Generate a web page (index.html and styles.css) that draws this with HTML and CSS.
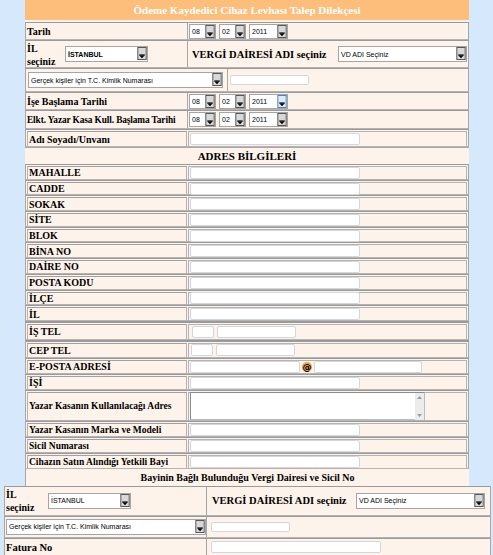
FILE: index.html
```html
<!DOCTYPE html>
<html lang="tr">
<head>
<meta charset="utf-8">
<title>Ödeme Kaydedici Cihaz Levhası Talep Dilekçesi</title>
<link rel="stylesheet" href="styles.css">
</head>
<body>
<div class="page">
  <div class="title">Ödeme Kaydedici Cihaz Levhası Talep Dilekçesi</div>

  <div class="row h-tarih">
    <div class="lab">Tarih</div>
    <div class="val dates">
      <span class="sel s-dd"><span class="st">08</span><span class="btn"><svg width="10" height="14" viewBox="0 0 10 14"><rect x="0.5" y="0.5" width="9" height="13" fill="#d8d8d8" stroke="#4d4d4d"/><rect x="2" y="8" width="6" height="1" fill="#000"/><polygon points="2,9 8,9 5,12" fill="#000"/></svg></span></span>
      <span class="sel s-dd"><span class="st">02</span><span class="btn"><svg width="10" height="14" viewBox="0 0 10 14"><rect x="0.5" y="0.5" width="9" height="13" fill="#d8d8d8" stroke="#4d4d4d"/><rect x="2" y="8" width="6" height="1" fill="#000"/><polygon points="2,9 8,9 5,12" fill="#000"/></svg></span></span>
      <span class="sel s-yy"><span class="st">2011</span><span class="btn"><svg width="10" height="14" viewBox="0 0 10 14"><rect x="0.5" y="0.5" width="9" height="13" fill="#d8d8d8" stroke="#4d4d4d"/><rect x="2" y="8" width="6" height="1" fill="#000"/><polygon points="2,9 8,9 5,12" fill="#000"/></svg></span></span>
    </div>
  </div>

  <div class="row h-il">
    <div class="lab il-lab">
      <div class="il-text"><div>İL</div><div>seçiniz</div></div>
      <span class="sel s-il"><span class="st">İSTANBUL</span><span class="btn"><svg width="10" height="14" viewBox="0 0 10 14"><rect x="0.5" y="0.5" width="9" height="13" fill="#d8d8d8" stroke="#4d4d4d"/><rect x="2" y="8" width="6" height="1" fill="#000"/><polygon points="2,9 8,9 5,12" fill="#000"/></svg></span></span>
    </div>
    <div class="val vd">
      <span class="vd-text">VERGİ DAİRESİ ADI seçiniz</span>
      <span class="sel s-vd"><span class="st">VD ADI Seçiniz</span><span class="btn"><svg width="10" height="14" viewBox="0 0 10 14"><rect x="0.5" y="0.5" width="9" height="13" fill="#d8d8d8" stroke="#4d4d4d"/><rect x="2" y="8" width="6" height="1" fill="#000"/><polygon points="2,9 8,9 5,12" fill="#000"/></svg></span></span>
    </div>
  </div>

  <div class="row h-tc">
    <div class="tc-cell">
      <span class="sel s-tc"><span class="st">Gerçek kişiler için T.C. Kimlik Numarası</span><span class="btn"><svg width="10" height="14" viewBox="0 0 10 14"><rect x="0.5" y="0.5" width="9" height="13" fill="#d8d8d8" stroke="#4d4d4d"/><rect x="2" y="8" width="6" height="1" fill="#000"/><polygon points="2,9 8,9 5,12" fill="#000"/></svg></span></span>
    </div>
    <div class="val tc-val"><span class="inp i-tc"></span></div>
  </div>

  <div class="row h-ise">
    <div class="lab">İşe Başlama Tarihi</div>
    <div class="val dates">
      <span class="sel s-dd"><span class="st">08</span><span class="btn"><svg width="10" height="14" viewBox="0 0 10 14"><rect x="0.5" y="0.5" width="9" height="13" fill="#d8d8d8" stroke="#4d4d4d"/><rect x="2" y="8" width="6" height="1" fill="#000"/><polygon points="2,9 8,9 5,12" fill="#000"/></svg></span></span>
      <span class="sel s-dd"><span class="st">02</span><span class="btn"><svg width="10" height="14" viewBox="0 0 10 14"><rect x="0.5" y="0.5" width="9" height="13" fill="#d8d8d8" stroke="#4d4d4d"/><rect x="2" y="8" width="6" height="1" fill="#000"/><polygon points="2,9 8,9 5,12" fill="#000"/></svg></span></span>
      <span class="sel s-yy focus"><span class="st">2011</span><span class="btn"><svg width="10" height="14" viewBox="0 0 10 14"><rect x="0.5" y="0.5" width="9" height="13" fill="#dbe9f8" stroke="#3c7fc4"/><rect x="2" y="8" width="6" height="1" fill="#000"/><polygon points="2,9 8,9 5,12" fill="#000"/></svg></span></span>
    </div>
  </div>

  <div class="row h-elkt">
    <div class="lab narrow">Elkt. Yazar Kasa Kull. Başlama Tarihi</div>
    <div class="val dates">
      <span class="sel s-dd"><span class="st">08</span><span class="btn"><svg width="10" height="14" viewBox="0 0 10 14"><rect x="0.5" y="0.5" width="9" height="13" fill="#d8d8d8" stroke="#4d4d4d"/><rect x="2" y="8" width="6" height="1" fill="#000"/><polygon points="2,9 8,9 5,12" fill="#000"/></svg></span></span>
      <span class="sel s-dd"><span class="st">02</span><span class="btn"><svg width="10" height="14" viewBox="0 0 10 14"><rect x="0.5" y="0.5" width="9" height="13" fill="#d8d8d8" stroke="#4d4d4d"/><rect x="2" y="8" width="6" height="1" fill="#000"/><polygon points="2,9 8,9 5,12" fill="#000"/></svg></span></span>
      <span class="sel s-yy"><span class="st">2011</span><span class="btn"><svg width="10" height="14" viewBox="0 0 10 14"><rect x="0.5" y="0.5" width="9" height="13" fill="#d8d8d8" stroke="#4d4d4d"/><rect x="2" y="8" width="6" height="1" fill="#000"/><polygon points="2,9 8,9 5,12" fill="#000"/></svg></span></span>
    </div>
  </div>

  <div class="row h-adi boxed">
    <div class="lab">Adı Soyadı/Unvanı</div>
    <div class="val"><span class="inp i-long"></span></div>
  </div>

  <div class="section">ADRES BİLGİLERİ</div>

  <div class="addr">
    <div class="row h-a boxed"><div class="lab">MAHALLE</div><div class="val"><span class="inp i-long"></span></div></div>
    <div class="row h-a boxed"><div class="lab">CADDE</div><div class="val"><span class="inp i-long"></span></div></div>
    <div class="row h-a boxed"><div class="lab">SOKAK</div><div class="val"><span class="inp i-long"></span></div></div>
    <div class="row h-a boxed"><div class="lab">SİTE</div><div class="val"><span class="inp i-long"></span></div></div>
    <div class="row h-a boxed"><div class="lab">BLOK</div><div class="val"><span class="inp i-long"></span></div></div>
    <div class="row h-a boxed"><div class="lab">BİNA NO</div><div class="val"><span class="inp i-long"></span></div></div>
    <div class="row h-a boxed"><div class="lab">DAİRE NO</div><div class="val"><span class="inp i-long"></span></div></div>
    <div class="row h-a boxed"><div class="lab">POSTA KODU</div><div class="val"><span class="inp i-long"></span></div></div>
    <div class="row h-a boxed"><div class="lab">İLÇE</div><div class="val"><span class="inp i-long"></span></div></div>
    <div class="row h-a boxed"><div class="lab">İL</div><div class="val"><span class="inp i-long"></span></div></div>
  </div>

  <div class="row h-tel boxed">
    <div class="lab">İŞ TEL</div>
    <div class="val tel"><span class="inp i-code"></span><span class="inp i-num"></span></div>
  </div>
  <div class="row h-tel2 boxed">
    <div class="lab">CEP TEL</div>
    <div class="val tel"><span class="inp i-code"></span><span class="inp i-num"></span></div>
  </div>

  <div class="row h-b boxed">
    <div class="lab">E-POSTA ADRESİ</div>
    <div class="val mail"><span class="inp i-mail1"></span><span class="at">@</span><span class="inp i-mail2"></span></div>
  </div>
  <div class="row h-b boxed">
    <div class="lab">İŞİ</div>
    <div class="val"><span class="inp i-long"></span></div>
  </div>
  <div class="row h-ta boxed">
    <div class="lab small">Yazar Kasanın Kullanılacağı Adres</div>
    <div class="val">
      <span class="textarea"><span class="sb"><svg width="9" height="27" viewBox="0 0 9 27"><rect width="9" height="27" fill="#ececec"/><polygon points="2,6 7,6 4.5,3" fill="#9a9a9a"/><polygon points="2,21 7,21 4.5,24" fill="#9a9a9a"/></svg></span></span>
    </div>
  </div>
  <div class="row h-b boxed">
    <div class="lab small">Yazar Kasanın Marka ve Modeli</div>
    <div class="val"><span class="inp i-long"></span></div>
  </div>
  <div class="row h-b boxed">
    <div class="lab small">Sicil Numarası</div>
    <div class="val"><span class="inp i-long"></span></div>
  </div>
  <div class="row h-b boxed">
    <div class="lab small">Cihazın Satın Alındığı Yetkili Bayi</div>
    <div class="val"><span class="inp i-long"></span></div>
  </div>

  <div class="section bayi">Bayinin Bağlı Bulunduğu Vergi Dairesi ve Sicil No</div>
</div>

<div class="wide">
  <div class="row w-il">
    <div class="wlab il-lab">
      <div class="il-text"><div>İL</div><div>seçiniz</div></div>
      <span class="sel s-il"><span class="st">İSTANBUL</span><span class="btn"><svg width="10" height="14" viewBox="0 0 10 14"><rect x="0.5" y="0.5" width="9" height="13" fill="#d8d8d8" stroke="#4d4d4d"/><rect x="2" y="8" width="6" height="1" fill="#000"/><polygon points="2,9 8,9 5,12" fill="#000"/></svg></span></span>
    </div>
    <div class="val vd wvd">
      <span class="vd-text">VERGİ DAİRESİ ADI seçiniz</span>
      <span class="sel s-vd"><span class="st">VD ADI Seçiniz</span><span class="btn"><svg width="10" height="14" viewBox="0 0 10 14"><rect x="0.5" y="0.5" width="9" height="13" fill="#d8d8d8" stroke="#4d4d4d"/><rect x="2" y="8" width="6" height="1" fill="#000"/><polygon points="2,9 8,9 5,12" fill="#000"/></svg></span></span>
    </div>
  </div>
  <div class="row w-tc">
    <div class="wlab wtc">
      <span class="sel s-tc"><span class="st">Gerçek kişiler için T.C. Kimlik Numarası</span><span class="btn"><svg width="10" height="14" viewBox="0 0 10 14"><rect x="0.5" y="0.5" width="9" height="13" fill="#d8d8d8" stroke="#4d4d4d"/><rect x="2" y="8" width="6" height="1" fill="#000"/><polygon points="2,9 8,9 5,12" fill="#000"/></svg></span></span>
    </div>
    <div class="val wval"><span class="inp i-tc"></span></div>
  </div>
  <div class="row w-fat">
    <div class="wlab fat">Fatura No</div>
    <div class="val wval"><span class="inp i-long"></span></div>
  </div>
</div>
</body>
</html>
```

FILE: styles.css
```css
* { box-sizing: border-box; }
body {
  margin: 0;
  background: #d6e8fb;
  font-family: "Liberation Serif", "Times New Roman", serif;
  color: #000;
  overflow: hidden;
}
.page {
  width: 444px;
  margin-left: 25px;
  background: #fdf3ea;
}
.title {
  height: 20px;
  background: #fdbe7c;
  color: #fff;
  font-weight: bold;
  font-size: 11px;
  line-height: 20px;
  text-align: center;
  margin-bottom: 2px;
}
.row {
  display: flex;
  border: 1px solid #a7a7a7;
  border-top-color: #9a9a9a;
  border-bottom-color: #b4b4b4;
}
.lab {
  width: 162px;
  flex: none;
  border-right: 1px solid #a7a7a7;
  font-weight: bold;
  font-size: 10px;
  display: flex;
  align-items: center;
  padding-left: 1px;
  white-space: nowrap;
  overflow: hidden;
}
.lab.small { font-size: 9.5px; }
.lab.narrow { font-size: 9.3px; letter-spacing: -0.1px; }
.val {
  flex: 1;
  display: flex;
  align-items: center;
  padding-left: 1px;
}
.h-tarih { height: 18px; }
.h-il { height: 28px; }
.h-tc { height: 24px; }
.h-ise { height: 18px; }
.h-elkt { height: 19px; }
.h-adi { height: 18px; }
.h-a { height: 15.7px; }
.h-tel { height: 19px; border-top-width: 2px; }
.h-tel2 { height: 18px; border-top-width: 2px; }
.h-b { height: 16px; }
.h-ta { height: 31px; }

.dates { gap: 3px; }

/* boxed rows: cells spaced with their own borders */
.boxed { padding: 1px 1px 0 1px; gap: 1px; }
.boxed .lab {
  width: 160px;
  border: 1px solid #b3b3b3;
  border-top-color: #a0a0a0;
  border-bottom: none;
  padding-left: 1px;
}
.boxed .val {
  border: 1px solid #b3b3b3;
  border-bottom: none;
  padding-left: 1px;
}

.section {
  height: 17px;
  border-top: 1px solid #a7a7a7;
  font-weight: bold;
  font-size: 11px;
  text-align: center;
  line-height: 16px;
}
.section.bayi {
  font-size: 10px;
  border-top: none;
  border-left: 1px solid #a7a7a7;
  height: 17px;
  line-height: 17px;
}

/* select widget */
.sel {
  display: inline-flex;
  align-items: stretch;
  height: 15px;
  background: #fff;
  border: 1px solid #a5a5a5;
  font-family: "Liberation Sans", Arial, sans-serif;
  font-size: 7px;
  color: #000;
}
.sel .st {
  flex: 1;
  display: flex;
  align-items: center;
  padding-left: 2px;
  white-space: nowrap;
  overflow: hidden;
}
.sel .btn { display: flex; align-items: stretch; }
.sel .btn svg { display: block; height: 13px; }
.s-dd { width: 27px; }
.s-yy { width: 39px; }
.s-il { width: 83px; height: 16px; }
.s-vd { width: 129px; height: 16px; }
.s-tc { width: 195px; height: 16px; }

/* inputs */
.inp {
  display: inline-block;
  height: 12px;
  background: #fff;
  border: 1px solid #d3d7dd;
  border-radius: 2px;
}
.i-long { width: 170px; }
.i-tc { width: 79px; height: 10px; }
.i-code { width: 22px; }
.i-num { width: 79px; }
.i-mail1 { width: 110px; }
.i-mail2 { width: 108px; }
.tel { gap: 3px; padding-left: 3px !important; }
.h-tel2 .tel { padding-left: 2px !important; }
.mail { gap: 2px; }
.at {
  width: 10px;
  height: 10px;
  border-radius: 50%;
  background: #e9a54c;
  color: #000;
  font-family: "DejaVu Sans", sans-serif;
  font-weight: bold;
  font-size: 9px;
  line-height: 10px;
  text-align: center;
}
.textarea {
  display: flex;
  justify-content: flex-end;
  width: 235px;
  height: 28px;
  background: #fff;
  border: 1px solid #b9bcc2;
  border-top-color: #8d8d8d;
  border-left-color: #8d8d8d;
}
.textarea .sb svg { display: block; }

/* IL row */
.il-lab {
  align-items: center;
  padding-left: 1px;
}
.il-text {
  width: 38px;
  font-size: 10px;
  line-height: 13px;
  font-weight: bold;
  padding-top: 1px;
}
.vd { padding-left: 4px; }
.vd-text {
  font-weight: bold;
  font-size: 10.5px;
  width: 146px;
  white-space: nowrap;
}
.tc-cell {
  width: 202px;
  flex: none;
  border-right: 1px solid #a7a7a7;
  display: flex;
  align-items: center;
  padding-left: 2px;
}
.tc-val { padding-left: 2px; }

/* wide table */
.wide {
  width: 487px;
  margin-left: 4px;
  background: #fdf3ea;
  height: 69px;
  border-left: 1px solid #a7a7a7;
  border-right: 1px solid #a7a7a7;
}
.wide .row { border-left: none; border-right: none; }
.wlab {
  width: 202px;
  flex: none;
  border-right: 1px solid #a7a7a7;
  display: flex;
  align-items: center;
}
.w-il { height: 30px; }
.w-il .wlab { padding-left: 1px; }
.w-il .il-text { width: 42px; }
.wvd { padding-left: 5px; }
.wvd .vd-text { width: 144px; }
.w-tc { height: 22px; }
.wtc { padding-left: 1px; }
.wtc .s-tc { width: 200px; }
.wval { padding-left: 4px; }
.w-fat { height: 18px; border-bottom: none; }
.fat { font-weight: bold; font-size: 10.5px; padding-left: 1px; }
```
